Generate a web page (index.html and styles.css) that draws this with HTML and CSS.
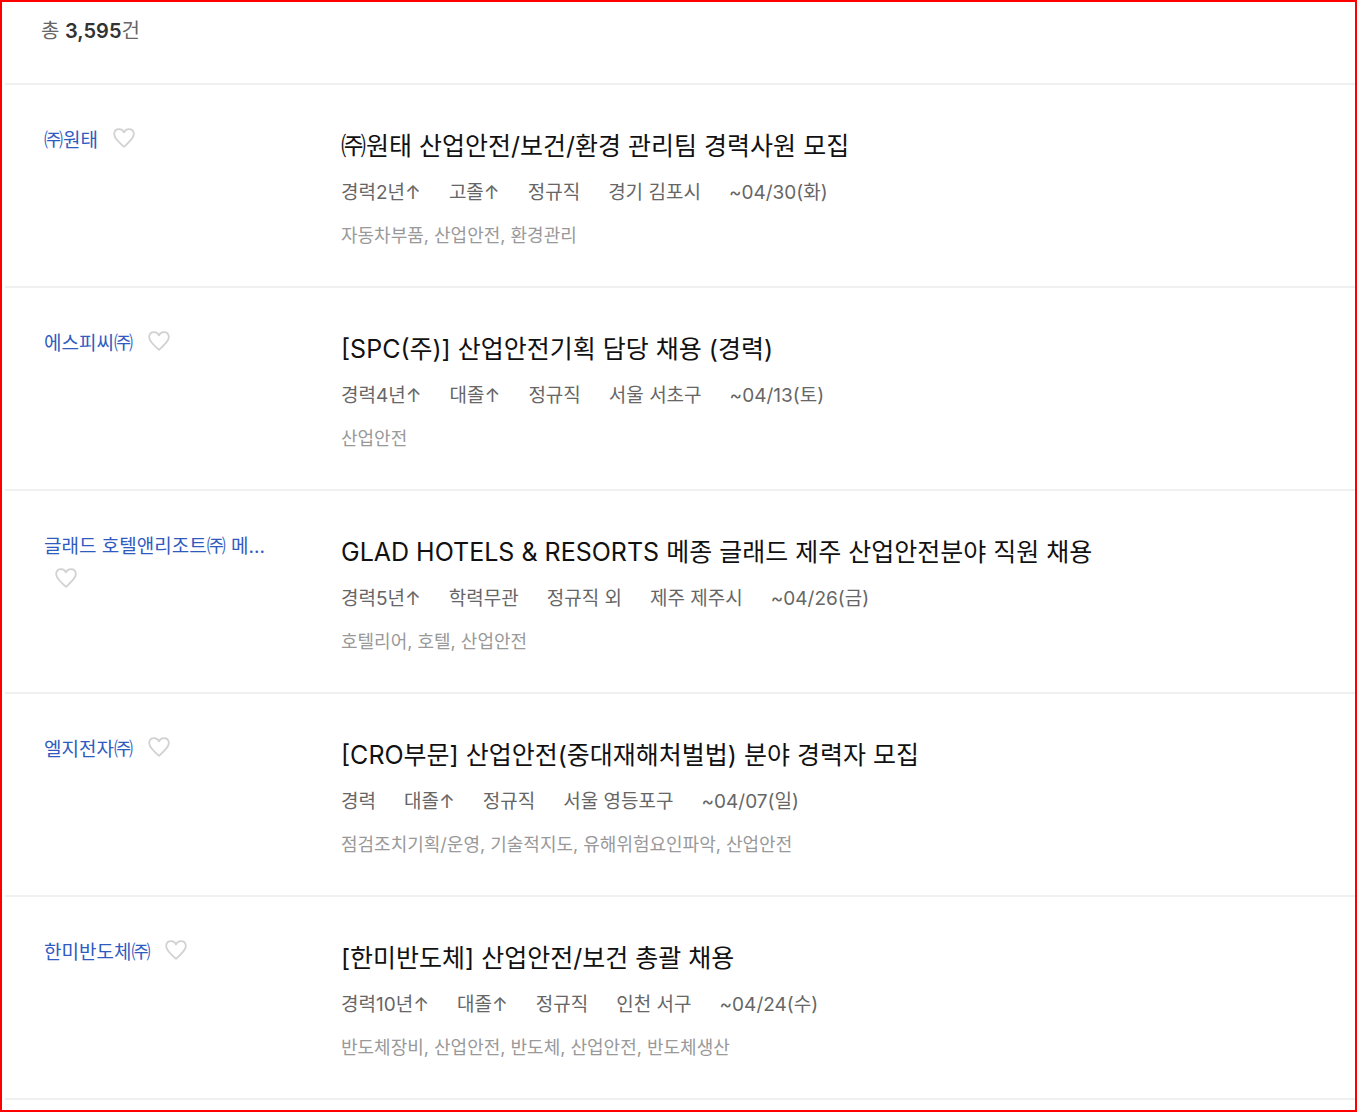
FILE: index.html
```html
<!DOCTYPE html>
<html lang="ko">
<head>
<meta charset="utf-8">
<meta name="viewport" content="width=device-width, initial-scale=1">
<title>채용공고 목록</title>
<link rel="stylesheet" href="styles.css">
</head>
<body>
<svg class="sprite" aria-hidden="true">
  <symbol id="heart" viewBox="0 0 24 22">
    <path d="M12 20.7C9.2 18.1 5.9 15.2 3.7 12.3C1.8 9.9 1 8.2 1.2 6.2C1.5 3.2 3.7 1.3 6.5 1.3C9.2 1.3 11.2 2.6 12 4.8C12.8 2.6 14.8 1.3 17.5 1.3C20.3 1.3 22.5 3.2 22.8 6.2C23 8.2 22.2 9.9 20.3 12.3C18.1 15.2 14.8 18.1 12 20.7Z"/>
  </symbol>
</svg>
<main class="results">
  <header class="summary">총 <strong>3,595</strong>건</header>
  <ul class="jobs">
    <li class="job">
      <div class="company">
        <a class="company-name" href="#">㈜원태</a>
        <button class="like" type="button" aria-label="관심기업"><svg class="heart"><use href="#heart"/></svg></button>
      </div>
      <div class="info">
        <h2 class="title"><a href="#">㈜원태 산업안전/보건/환경 관리팀 경력사원 모집</a></h2>
        <ul class="meta"><li>경력2년↑</li><li>고졸↑</li><li>정규직</li><li>경기 김포시</li><li>~04/30(화)</li></ul>
        <p class="tags">자동차부품, 산업안전, 환경관리</p>
      </div>
    </li>
    <li class="job">
      <div class="company">
        <a class="company-name" href="#">에스피씨㈜</a>
        <button class="like" type="button" aria-label="관심기업"><svg class="heart"><use href="#heart"/></svg></button>
      </div>
      <div class="info">
        <h2 class="title"><a href="#">[SPC(주)] 산업안전기획 담당 채용 (경력)</a></h2>
        <ul class="meta"><li>경력4년↑</li><li>대졸↑</li><li>정규직</li><li>서울 서초구</li><li>~04/13(토)</li></ul>
        <p class="tags">산업안전</p>
      </div>
    </li>
    <li class="job">
      <div class="company">
        <a class="company-name" href="#">글래드 호텔앤리조트㈜ 메...</a>
        <button class="like" type="button" aria-label="관심기업"><svg class="heart"><use href="#heart"/></svg></button>
      </div>
      <div class="info">
        <h2 class="title"><a href="#">GLAD HOTELS &amp; RESORTS 메종 글래드 제주 산업안전분야 직원 채용</a></h2>
        <ul class="meta"><li>경력5년↑</li><li>학력무관</li><li>정규직 외</li><li>제주 제주시</li><li>~04/26(금)</li></ul>
        <p class="tags">호텔리어, 호텔, 산업안전</p>
      </div>
    </li>
    <li class="job">
      <div class="company">
        <a class="company-name" href="#">엘지전자㈜</a>
        <button class="like" type="button" aria-label="관심기업"><svg class="heart"><use href="#heart"/></svg></button>
      </div>
      <div class="info">
        <h2 class="title"><a href="#">[CRO부문] 산업안전(중대재해처벌법) 분야 경력자 모집</a></h2>
        <ul class="meta"><li>경력</li><li>대졸↑</li><li>정규직</li><li>서울 영등포구</li><li>~04/07(일)</li></ul>
        <p class="tags">점검조치기획/운영, 기술적지도, 유해위험요인파악, 산업안전</p>
      </div>
    </li>
    <li class="job">
      <div class="company">
        <a class="company-name" href="#">한미반도체㈜</a>
        <button class="like" type="button" aria-label="관심기업"><svg class="heart"><use href="#heart"/></svg></button>
      </div>
      <div class="info">
        <h2 class="title"><a href="#">[한미반도체] 산업안전/보건 총괄 채용</a></h2>
        <ul class="meta"><li>경력10년↑</li><li>대졸↑</li><li>정규직</li><li>인천 서구</li><li>~04/24(수)</li></ul>
        <p class="tags">반도체장비, 산업안전, 반도체, 산업안전, 반도체생산</p>
      </div>
    </li>
  </ul>
</main>
</body>
</html>
```
FILE: styles.css
```css
* {
  box-sizing: border-box;
}

body {
  margin: 0;
  background: #fff;
  color: #666;
  font-family: Inter, "Noto Sans CJK KR", sans-serif;
  font-size: 19px;
  line-height: 24px;
}

a {
  color: inherit;
  text-decoration: none;
}

ul {
  margin: 0;
  padding: 0;
  list-style: none;
}

.sprite {
  display: none;
}

.results {
  min-height: 100vh;
  padding-left: 3px;
  border: 2px solid #f00;
}

.summary {
  padding: 17px 36px 40px;
  border-bottom: 2px solid #f0f0f0;
  font-size: 20px;
}

.summary strong {
  color: #333;
  font-weight: 600;
}

.job {
  display: grid;
  grid-template-columns: 240px 1fr;
  column-gap: 57px;
  padding: 40px 39px 38px;
  border-bottom: 2px solid #f0f0f0;
}

.company {
  display: flex;
  flex-wrap: wrap;
  align-content: flex-start;
  row-gap: 2px;
}

.company-name {
  padding-right: 4px;
  color: #2f5bc0;
  line-height: 32px;
}

.like {
  display: flex;
  margin: 0 0 0 11px;
  padding: 3px 0 8px;
  border: 0;
  background: none;
}

.heart {
  width: 22px;
  height: 20px;
  fill: none;
  stroke: #d2d2d2;
  stroke-width: 2;
  stroke-linejoin: round;
}

.info {
  padding-top: 5px;
}

.title {
  margin: 0 0 19px;
  color: #111;
  font-size: 25px;
  font-weight: 400;
  line-height: 32px;
}

.meta {
  display: flex;
  flex-wrap: wrap;
  column-gap: 28px;
  margin-bottom: 19px;
}

.tags {
  margin: 0;
  color: #999;
  font-size: 18px;
}
```
